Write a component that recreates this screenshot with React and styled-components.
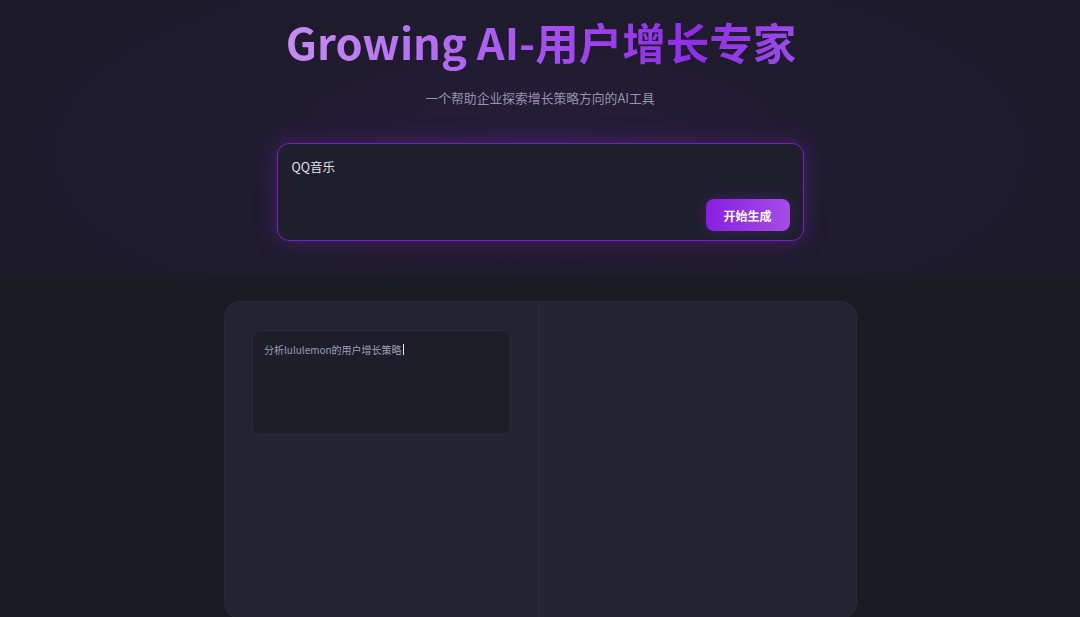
import styled, { createGlobalStyle } from "styled-components";

const GlobalStyle = createGlobalStyle`
  html, body {
    margin: 0;
    padding: 0;
    background: #1b1b24;
    font-family: "Noto Sans CJK SC", "Noto Sans", sans-serif;
    overflow: hidden;
  }
`;

const Page = styled.div`
  width: 100vw;
  height: 100vh;
  background: #1b1b24;
  display: flex;
  flex-direction: column;
  align-items: center;
`;

const Hero = styled.section`
  width: 100%;
  box-sizing: border-box;
  padding: 16px 0 34px;
  display: flex;
  flex-direction: column;
  align-items: center;
  background: radial-gradient(
    ellipse 50% 75% at 50% 55%,
    rgba(88, 40, 140, 0.16) 0%,
    rgba(60, 35, 100, 0.08) 55%,
    rgba(27, 27, 36, 0) 100%
  ),
  #1d1b2a;
`;

const Title = styled.h1`
  margin: 0 0 -8px;
  padding: 0 2px 8px 4px;
  font-size: 43.5px;
  line-height: 52px;
  font-weight: 700;
  background: linear-gradient(90deg, #c78ef1 0%, #b066f2 35%, #9a3bec 65%, #8f2ee6 80%, #9b4cea 100%);
  -webkit-background-clip: text;
  background-clip: text;
  color: transparent;
`;

const Subtitle = styled.p`
  margin: 20px 0 0;
  font-size: 12.8px;
  line-height: 20px;
  color: #9594ae;
`;

const InputBox = styled.div`
  margin-top: 35px;
  width: 527px;
  height: 98px;
  box-sizing: border-box;
  padding: 14px 13px 9px 14px;
  border: 1px solid #7a20c8;
  border-radius: 12px;
  background: #1e1f2c;
  box-shadow: 0 0 22px rgba(140, 40, 220, 0.35);
  display: flex;
  flex-direction: column;
  justify-content: space-between;
`;

const Query = styled.div`
  font-size: 12.5px;
  line-height: 18px;
  color: #e2e2ea;
`;

const Button = styled.button`
  align-self: flex-end;
  width: 84px;
  height: 32px;
  border: none;
  border-radius: 8px;
  background: linear-gradient(90deg, #8a1ee0, #a44ee6);
  color: #fff;
  font-family: inherit;
  font-size: 12px;
  font-weight: 700;
  box-shadow: 0 0 14px rgba(140, 40, 220, 0.3);
  cursor: pointer;
`;

const Card = styled.main`
  margin-top: 26px;
  margin-left: 1px;
  width: 633px;
  height: 318px;
  box-sizing: border-box;
  border: 1px solid #282a38;
  border-radius: 16px;
  background: #222432;
  display: grid;
  grid-template-columns: 315px 1fr;
  overflow: hidden;
  flex-shrink: 0;
`;

const Pane = styled.div`
  padding: ${(p) => (p.$left ? "28px 28px 0 27px" : "0")};
  border-right: ${(p) => (p.$left ? "1px solid #2c2e3d" : "none")};
`;

const PromptBox = styled.div`
  height: 105px;
  box-sizing: border-box;
  padding: 11px 11px;
  border: 1px solid #2a2c3a;
  border-radius: 8px;
  background: #1d1e2a;
  font-size: 10px;
  line-height: 15px;
  color: #9e9db8;
`;

const Caret = styled.span`
  display: inline-block;
  width: 1px;
  height: 11px;
  margin-left: 1px;
  vertical-align: -1px;
  background: #e8e8f0;
`;

export default function App() {
  return (
    <Page>
      <GlobalStyle />
      <Hero>
        <Title>Growing AI-用户增长专家</Title>
        <Subtitle>一个帮助企业探索增长策略方向的AI工具</Subtitle>
        <InputBox>
          <Query>QQ音乐</Query>
          <Button>开始生成</Button>
        </InputBox>
      </Hero>
      <Card>
        <Pane $left>
          <PromptBox>
            分析lululemon的用户增长策略
            <Caret />
          </PromptBox>
        </Pane>
        <Pane />
      </Card>
    </Page>
  );
}
